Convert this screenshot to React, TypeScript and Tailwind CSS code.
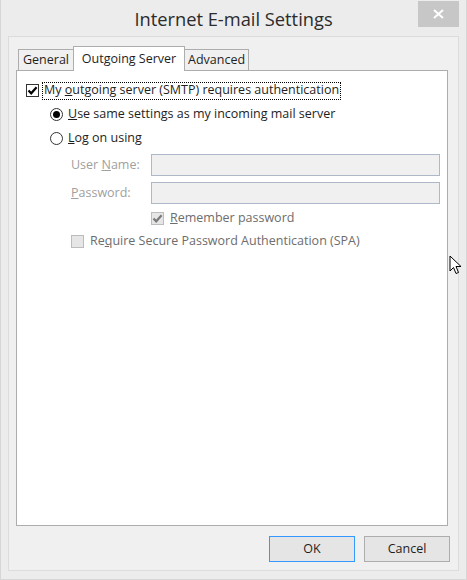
import React from "react";

const font = { fontFamily: '"Open Sans", "Noto Sans", sans-serif' };

function Tick({ color = "#000" }: { color?: string }) {
  return (
    <svg width="11" height="11" viewBox="0 0 11 11">
      <path d="M1.5 5.5 L4.2 8.3 L9.6 2.2" fill="none" stroke={color} strokeWidth="2.2" />
    </svg>
  );
}

function Check({ checked, disabled }: { checked?: boolean; disabled?: boolean }) {
  return (
    <div
      className={`w-[13px] h-[13px] flex items-center justify-center border ${
        disabled ? "border-[#bcbcbc] bg-[#e6e6e6]" : "border-[#333333] bg-white"
      }`}
    >
      {checked && <Tick color={disabled ? "#7a7a7a" : "#000"} />}
    </div>
  );
}

function Radio({ on }: { on?: boolean }) {
  return (
    <div className="w-[13px] h-[13px] rounded-full border border-[#333333] bg-white flex items-center justify-center">
      {on && <div className="w-[7px] h-[7px] rounded-full bg-black" />}
    </div>
  );
}

function Cursor() {
  return (
    <svg className="absolute left-[448px] top-[255px]" width="14" height="20" viewBox="0 0 14 20">
      <path d="M1 1 L1 16 L4.5 12.5 L7 18.5 L9.5 17.5 L7 11.5 L12 11.5 Z" fill="#fff" stroke="#000" strokeWidth="1" />
    </svg>
  );
}

export default function App() {
  return (
    <div
      className="relative w-[467px] h-[580px] bg-[#ececec] border border-t-0 border-[#d6d6d6] flex flex-col text-[12.5px] text-[#1e1e1e]"
      style={font}
    >
      {/* title bar */}
      <div className="relative h-[36px] flex items-center justify-center">
        <span className="text-[18.3px] text-[#2b2b2b] mt-[2px]">Internet E-mail Settings</span>
        <div className="absolute right-[7px] top-[1px] w-[41px] h-[26px] bg-[#c7c7c7] flex items-center justify-center">
          <svg width="11" height="10" viewBox="0 0 11 10">
            <path d="M1 1 L10 9 M10 1 L1 9" stroke="#fff" strokeWidth="2" />
          </svg>
        </div>
      </div>

      {/* client */}
      <div className="mx-[7px] h-[535px] border border-[#dcdcdc] bg-[#f0f0f0] flex flex-col pl-[7px] pr-[10px] pt-[8px]">
        {/* tabs */}
        <div className="flex items-end h-[25px] pl-[2px]">
          <div className="h-[21px] px-[4px] border border-b-0 border-[#adadad] bg-[#f0f0f0] flex items-center">
            General
          </div>
          <div className="h-[25px] w-[112px] -mb-px relative z-10 border border-b-0 border-[#adadad] bg-white flex items-start justify-center pt-[3px] -mx-px">
            Outgoing Server
          </div>
          <div className="h-[21px] px-[3px] border border-b-0 border-[#adadad] bg-[#f0f0f0] flex items-center">
            Advanced
          </div>
        </div>

        {/* panel */}
        <div className="h-[456px] border border-[#adadad] bg-white pl-[9px] pt-[13px] flex flex-col">
          <div className="flex items-center h-[13px]">
            <Check checked />
            <div className="ml-[3px] px-[1px] border border-dotted border-[#000] h-[18px] flex items-center">
              <span>
                My <u>o</u>utgoing server (SMTP) requires authentication
              </span>
            </div>
          </div>

          <div className="flex items-center h-[13px] mt-[11px] ml-[24px]">
            <Radio on />
            <span className="ml-[5px]">
              <u>U</u>se same settings as my incoming mail server
            </span>
          </div>

          <div className="flex items-center h-[13px] mt-[11px] ml-[24px]">
            <Radio />
            <span className="ml-[5px]">
              <u>L</u>og on using
            </span>
          </div>

          <div className="flex items-center h-[22px] mt-[9px] ml-[45px] text-[#a0a0a0]">
            <span className="w-[80px]">
              User <u>N</u>ame:
            </span>
            <div className="w-[289px] h-[22px] border border-[#adb8c9] bg-[#f0f0f0]" />
          </div>

          <div className="flex items-center h-[22px] mt-[6px] ml-[45px] text-[#a0a0a0]">
            <span className="w-[80px]">
              <u>P</u>assword:
            </span>
            <div className="w-[289px] h-[22px] border border-[#adb8c9] bg-[#f0f0f0]" />
          </div>

          <div className="flex items-center h-[13px] mt-[8px] ml-[125px] text-[#6d6d6d]">
            <Check checked disabled />
            <span className="ml-[6px]">
              <u>R</u>emember password
            </span>
          </div>

          <div className="flex items-center h-[13px] mt-[10px] ml-[45px] text-[#6d6d6d]">
            <Check disabled />
            <span className="ml-[6px]">
              Re<u>q</u>uire Secure Password Authentication (SPA)
            </span>
          </div>
        </div>

        {/* buttons */}
        <div className="flex justify-end gap-[9px] mt-[10px] -mr-[2px]">
          <div className="w-[86px] h-[26px] border border-[#3399ff] bg-[#e5e5e5] flex items-center justify-center">
            OK
          </div>
          <div className="w-[86px] h-[26px] border border-[#adadad] bg-[#e5e5e5] flex items-center justify-center">
            Cancel
          </div>
        </div>
      </div>

      <Cursor />
    </div>
  );
}
